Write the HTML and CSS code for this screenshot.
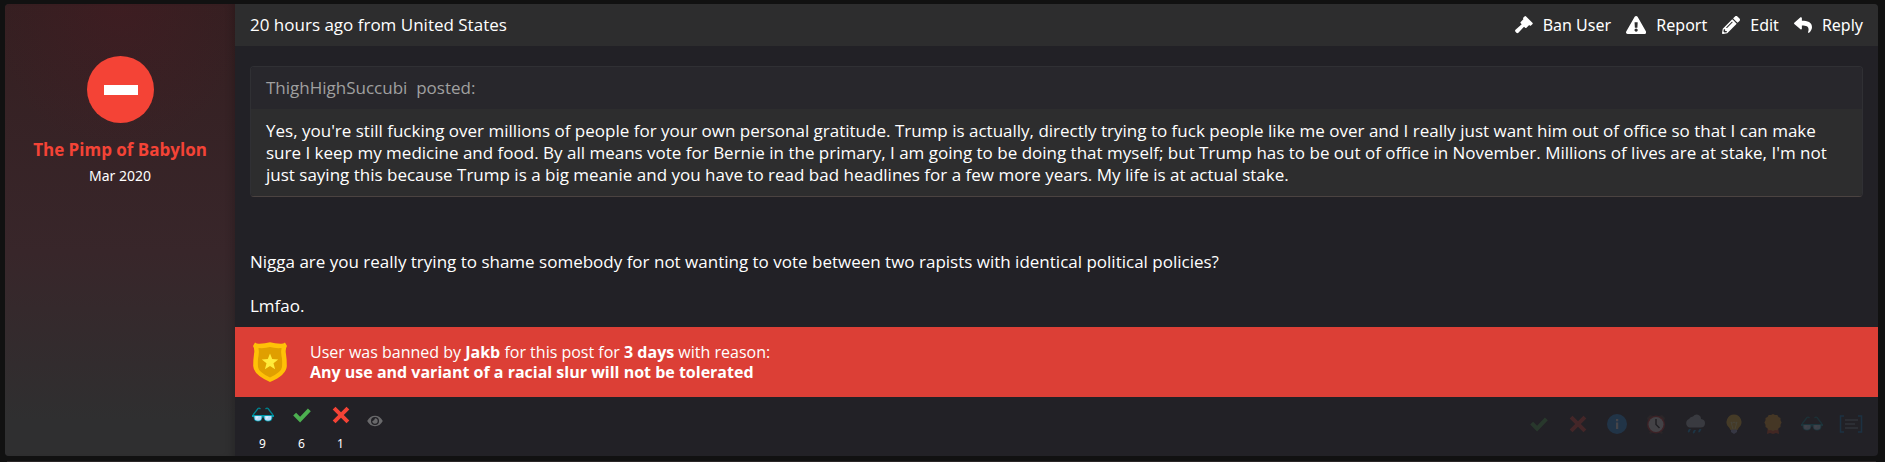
FILE: index.html
```
<!DOCTYPE html>
<html lang="en">
<head>
  <meta charset="UTF-8" />
  <meta name="viewport" content="width=device-width, initial-scale=1.0"/>
  <title>Thread</title>
  <link rel="stylesheet" href="styles.css">
</head>
<body>
  <!-- shared icons -->
  <svg class="sprite" aria-hidden="true">
    <symbol id="i-check" viewBox="0 0 20 20"><path d="M1.2 10.6l2.9-2.8 4 4L15.9 3.400l2.900 2.900L8.100 17.500z" fill="#4caf50"/></symbol>
    <symbol id="i-cross" viewBox="0 0 20 20"><path d="M4.500 1.700L10 7.200l5.500-5.500 2.800 2.800L12.800 10l5.500 5.500-2.800 2.800L10 12.800l-5.500 5.500-2.800-2.800L7.200 10 1.700 4.500z" fill="#f44336"/></symbol>
    <symbol id="i-glasses" viewBox="0 0 24 20">
      <path d="M2 10L7 3.500Q8 2.500 9.500 4M22 10L17 3.500Q16 2.500 14.500 4" fill="none" stroke="#00838f" stroke-width="1.300"/>
      <path d="M1 10h22v2h-1.500q0 4.500-4.500 4.500-4 0-4.300-4h-1.400q-.3 4-4.300 4-4.500 0-4.500-4.500H1z" fill="#0097a7"/>
      <path d="M3.500 11h7v1.500q0 3.200-3.500 3.200t-3.500-3.200zM13.500 11h7v1.500q0 3.200-3.500 3.200t-3.500-3.200z" fill="#bbdefb"/>
      <path d="M5 11.500h2.500l-2 3M15 11.500h2.500l-2 3" fill="#e3f2fd"/>
    </symbol>
  </svg>

  <article class="post">
    <aside class="user">
      <svg class="avatar" viewBox="0 0 67 67" role="img" aria-label="Banned">
        <circle cx="33.500" cy="33.500" r="33.500" fill="#f44336"/>
        <path d="M17 29h34v10H17z" fill="#fff"/>
      </svg>
      <a class="username" href="#">The Pimp of Babylon</a>
      <span class="joined">Mar 2020</span>
    </aside>

    <div class="content">
      <header class="post-header">
        <span>20 hours ago from United States</span>
        <nav class="actions">
          <a href="#ban">
            <svg viewBox="0 0 18 18"><path d="M8.200 1.800L9.800.200q.7-.4 1.300.2l6.300 6.300q.6.600.2 1.300L16 9.600q-.7.500-1.300-.1l-.5-.4-2.700 2.700q-.7.600-1.400 0L9 10.700l-5.600 6q-1 .9-2 0l-.9-.9q-.9-1 0-2l6.200-5.500-1-1q-.6-.7 0-1.400l2.800-2.800-.3-.3q-.5-.5 0-1z"/></svg>
            Ban User
          </a>
          <a href="#report">
            <svg viewBox="0 0 576 512"><path d="M569.517 440.013C587.975 472.007 564.806 512 527.940 512H48.054c-36.937 0-59.999-40.055-41.577-71.987L246.423 23.985c18.467-32.009 64.720-31.951 83.154 0l239.940 416.028zM288 354c-25.405 0-46 20.595-46 46s20.595 46 46 46 46-20.595 46-46-20.595-46-46-46zm-43.673-165.346l7.418 136c.347 6.364 5.609 11.346 11.982 11.346h48.546c6.373 0 11.635-4.982 11.982-11.346l7.418-136c.375-6.874-5.098-12.654-11.982-12.654h-63.383c-6.884 0-12.356 5.780-11.981 12.654z"/></svg>
            Report
          </a>
          <a href="#edit">
            <svg viewBox="0 0 512 512"><path d="M497.900 142.100l-46.100 46.100c-4.700 4.700-12.300 4.700-17 0l-111-111c-4.700-4.700-4.700-12.300 0-17l46.100-46.100c18.700-18.700 49.100-18.700 67.900 0l60.100 60.100c18.800 18.700 18.800 49.100 0 67.900zM284.200 99.800L21.600 362.400.400 483.900c-2.900 16.400 11.400 30.600 27.800 27.800l121.500-21.300 262.600-262.600c4.700-4.700 4.700-12.300 0-17l-111-111c-4.800-4.700-12.400-4.700-17.100 0zM124.100 339.900c-5.500-5.500-5.500-14.300 0-19.800l154-154c5.500-5.500 14.300-5.500 19.800 0s5.500 14.300 0 19.800l-154 154c-5.500 5.500-14.300 5.500-19.800 0zM88 424h48v36.300l-64.500 11.300-31.100-31.100L51.700 376H88v48z"/></svg>
            Edit
          </a>
          <a href="#reply">
            <svg viewBox="0 0 512 512"><path d="M8.309 189.836L184.313 37.851C199.719 24.546 224 35.347 224 56.015v80.053c160.629 1.839 288 34.032 288 186.258 0 61.441-39.581 122.309-83.333 154.132-13.653 9.931-33.111-2.533-28.077-18.631 45.344-145.012-21.507-183.510-176.590-185.742V360c0 20.700-24.300 31.453-39.687 18.164l-176.004-152c-11.071-9.562-11.086-26.753 0-36.328z"/></svg>
            Reply
          </a>
        </nav>
      </header>

      <div class="message">
        <blockquote class="quote">
          <div class="quote-title"><a href="#">ThighHighSuccubi</a>&nbsp; posted:</div>
          <div class="quote-body">Yes, you're still fucking over millions of people for your own personal gratitude. Trump is actually, directly trying to fuck people like me over and I really just want him out of office so that I can make sure I keep my medicine and food. By all means vote for Bernie in the primary, I am going to be doing that myself; but Trump has to be out of office in November. Millions of lives are at stake, I'm not just saying this because Trump is a big meanie and you have to read bad headlines for a few more years. My life is at actual stake.</div>
        </blockquote>
        <p>Nigga are you really trying to shame somebody for not wanting to vote between two rapists with identical political policies?</p>
        <p>Lmfao.</p>
      </div>

      <div class="ban">
        <svg viewBox="0 0 36 40">
          <path d="M3 .5q2 1.500 4.500 1.200Q13 1.500 18 .2q5 1.300 10.500 1.500Q31 2 33 .5L35 4q-2 3-1 8 .8 5 .8 12-.3 9-16.800 16Q1.500 33 1.200 24q0-7 .8-12 1-5-1-8z" fill="#ffc107"/>
          <path d="M6.500 6Q13 6.500 18 5q5 1.500 11.500 1-.8 4 0 8 1 4 .5 11-.5 5-12 10.500Q6.500 30 6 25q-.5-7 .5-11 .8-4 0-8z" fill="#e09f00"/>
          <path d="M18 11.500l2.200 5.600 6 .4-4.700 3.800 1.600 5.900-5.100-3.300-5.100 3.300 1.600-5.900-4.700-3.800 6-.4z" fill="#ffeb3b"/>
        </svg>
        <p>User was banned by <b>Jakb</b> for this post for <b>3 days</b> with reason:<br><b>Any use and variant of a racial slur will not be tolerated</b></p>
      </div>

      <footer class="post-footer">
        <div class="results">
          <span><svg viewBox="0 0 24 20"><use href="#i-glasses"/></svg>9</span>
          <span><svg viewBox="0 0 20 20"><use href="#i-check"/></svg>6</span>
          <span><svg viewBox="0 0 20 20"><use href="#i-cross"/></svg>1</span>
          <button class="eye" aria-label="Show ratings">
            <svg viewBox="0 0 16 12"><path d="M8 .8Q13 .8 15.800 6 13 11.200 8 11.200T.2 6Q3 .8 8 .8zM8 2a4 4 0 1 0 0 8 4 4 0 0 0 0-8zm0 1.300A2.700 2.700 0 1 1 5.300 6q1.900.4 2.700-2.700z" fill="#69696b" fill-rule="evenodd"/></svg>
          </button>
        </div>
        <div class="rate">
          <button aria-label="Agree"><svg viewBox="0 0 20 20"><use href="#i-check"/></svg></button>
          <button aria-label="Disagree"><svg viewBox="0 0 20 20"><use href="#i-cross"/></svg></button>
          <button aria-label="Informative"><svg viewBox="0 0 20 20"><circle cx="10" cy="10" r="10" fill="#2196f3"/><path d="M9 8.500h2.200V15H9zM9 5h2.200v2.200H9z" fill="#fff"/></svg></button>
          <button aria-label="Late"><svg viewBox="0 0 20 20"><path d="M1 4l3-3 3 1-5 5zM19 4l-3-3-3 1 5 5zM3 19l2-3 2 1-2 3zM17 19l-2-3-2 1 2 3z" fill="#5d4037"/><circle cx="10" cy="10.500" r="9" fill="#c62828"/><circle cx="10" cy="10.500" r="7.500" fill="#eee"/><path d="M10 5v5.500l3.500 3.500" fill="none" stroke="#111" stroke-width="1.500"/></svg></button>
          <button aria-label="Gloomy"><svg viewBox="0 0 20 20"><path d="M4.500 13.500a4.500 4.500 0 0 1-.5-8.500A5 5 0 0 1 8 2.500Q10 0 13 .8q3 1 3 4.200 4 .5 4 4.300 0 4.200-4.500 4.200z" fill="#b0bec5"/><path d="M4 15q-2 3-.8 3.500T6 15zm5 1q-2 3-.8 3.500T11 16zm5.500-1q-2 3-.8 3.500t2.800-3.500z" fill="#039be5"/></svg></button>
          <button aria-label="Bright idea"><svg viewBox="0 0 20 20"><path d="M10 .5a7.500 7.500 0 0 1 5 13q-1 1-1.500 2.500h-7Q6 14.500 5 13.500A7.500 7.500 0 0 1 10 .5z" fill="#fbc02d"/><path d="M7 8l2 7M13 8l-2 7M7 8l1.500 1L10 8l1.500 1L13 8" fill="none" stroke="#fff59d"/><path d="M7 15.500h6v2.500l-3 2-3-2z" fill="#9fa8da"/></svg></button>
          <button aria-label="Winner"><svg viewBox="0 0 20 20"><path d="M5 12h10l1 8-3-1-3 1-3-1-3 1z" fill="#e64a19"/><path d="M10 0l2 1.100 2.300-.2 1.200 2 2 1.100v2.300L18.600 8.500l-1.100 2.200V13l-2 1.200-1.200 2-2.300-.2-2 1.100L8 16l-2.300.2-1.200-2-2-1.200v-2.300L1.400 8.500l1.100-2.200V4l2-1.100 1.200-2L8 1.100z" fill="#f9a825"/></svg></button>
          <button aria-label="Cool"><svg class="wide" viewBox="0 0 24 20"><use href="#i-glasses"/></svg></button>
          <button aria-label="Well written"><svg class="wide" viewBox="0 0 24 20"><path d="M5 2H1.500v16H5M19 2h3.500v16H19" fill="none" stroke="#0288d1" stroke-width="1.500"/><path d="M6 6h13M6 10h10M6 14h13" stroke="#78909c" stroke-width="1.500"/></svg></button>
        </div>
      </footer>
    </div>
  </article>

  <div class="next-post"></div>
</body>
</html>
```

FILE: styles.css
```
* {
  box-sizing: border-box;
  margin: 0;
  padding: 0;
}

body {
  background: #111;
  color: #fff;
  font: 17px/22px "Open Sans", "Noto Sans", sans-serif;
  padding: 4px 7px 0 5px;
}

a {
  color: inherit;
  text-decoration: none;
}

button {
  background: none;
  border: 0;
  cursor: pointer;
}

svg {
  display: block;
}

.sprite {
  display: none;
}

.post {
  display: flex;
  border-radius: 4px;
  overflow: hidden;
  background: #222126;
}

.user {
  flex: 0 0 230px;
  display: flex;
  flex-direction: column;
  align-items: center;
  padding: 52px 10px 0;
  background: radial-gradient(ellipse 130px 150px at 50% 0, rgba(80, 24, 34, 0.3), transparent), linear-gradient(#351f21, #38262a 55%, #2f2f30 92%);
  box-shadow: inset -8px 0 8px -6px rgba(0, 0, 0, 0.2);
}

.avatar {
  width: 67px;
  height: 67px;
}

.username {
  margin-top: 16px;
  color: #f44336;
  font-weight: bold;
}

.joined {
  margin-top: 4px;
  font-family: "Noto Sans", sans-serif;
  font-size: 14px;
}

.content {
  flex: 1;
  min-width: 0;
}

.post-header {
  display: flex;
  justify-content: space-between;
  align-items: center;
  height: 42px;
  padding: 0 15px;
  background: #2d2d2e;
}

.actions {
  display: flex;
  gap: 15px;
  font-family: "Noto Sans", sans-serif;
  font-size: 16px;
}

.actions a {
  display: flex;
  align-items: center;
  gap: 10px;
}

.actions svg {
  height: 18px;
  fill: #fff;
}

.message {
  padding: 20px 15px 10px;
}

.message p + p {
  margin-top: 22px;
}

.quote {
  margin-bottom: 54px;
  border: 1px solid #303034;
  border-bottom-color: #4b4341;
  border-radius: 4px;
  overflow: hidden;
}

.quote-title {
  padding: 10px 15px;
  background: #28272c;
  color: #a0a0a0;
}

.quote-body {
  padding: 11px 15px 10px;
  background: #2d2d2e;
}

.ban {
  display: flex;
  align-items: center;
  gap: 22px;
  height: 70px;
  padding: 0 17px;
  background: #dc3f36;
  font-size: 16px;
  line-height: 20px;
}

.ban svg {
  width: 36px;
  height: 40px;
}

.post-footer {
  display: flex;
  justify-content: space-between;
  height: 59px;
}

.results {
  display: flex;
  padding: 8px 8px 0;
  font-family: "Noto Sans", sans-serif;
  font-size: 12px;
}

.results span {
  width: 39px;
  display: flex;
  flex-direction: column;
  align-items: center;
  gap: 8px;
}

.results span svg {
  height: 20px;
}

.eye {
  align-self: flex-start;
  padding: 10px 7px;
}

.eye svg {
  width: 16px;
  height: 12px;
}

.rate {
  display: flex;
  padding: 17px 8px;
  opacity: 0.16;
}

.rate button {
  width: 39px;
  height: 20px;
  display: flex;
  justify-content: center;
}

.rate svg {
  width: 20px;
  height: 20px;
}

.rate .wide {
  width: 24px;
}

.next-post {
  height: 1px;
  margin: 5px 2px 0;
  background: #2b2627;
}
```
